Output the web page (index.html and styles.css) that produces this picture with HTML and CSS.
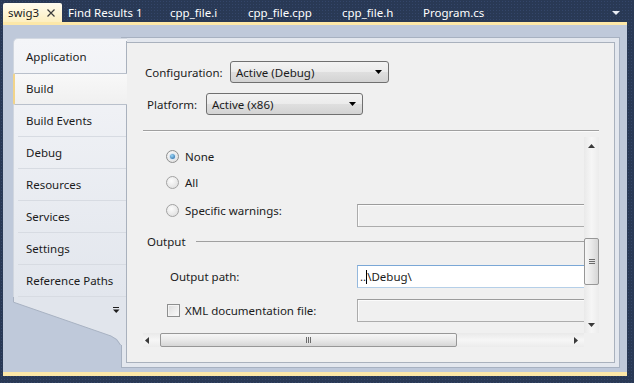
FILE: index.html
```html
<!DOCTYPE html>
<html lang="en">
<head>
    <meta charset="UTF-8">
    <title>swig3 - Build</title>
    <link rel="stylesheet" href="styles.css">
</head>
<body>
    <div class="window">
        <div class="tabstrip">
            <div class="tab active">
                <span>swig3</span>
                <svg class="close" width="8" height="8" viewBox="0 0 8 8"><path d="M0.5 0.5L7.5 7.5M7.5 0.5L0.5 7.5" stroke="#3c3c3c" stroke-width="1.2"/></svg>
            </div>
            <div class="tab tab-find">Find Results 1</div>
            <div class="tab tab-i">cpp_file.i</div>
            <div class="tab tab-cpp">cpp_file.cpp</div>
            <div class="tab tab-h">cpp_file.h</div>
            <div class="tab tab-cs">Program.cs</div>
            <svg class="tab-menu" width="8" height="5" viewBox="0 0 8 5"><path d="M0 0H8L4 4Z" fill="#e8ecf4"/></svg>
        </div>
        <div class="tabline"></div>

        <div class="doc">
            <nav class="pages">
                <div class="page-list">
                    <div class="page">Application</div>
                    <div class="page selected">Build</div>
                    <div class="page">Build Events</div>
                    <div class="page">Debug</div>
                    <div class="page">Resources</div>
                    <div class="page">Services</div>
                    <div class="page">Settings</div>
                    <div class="page">Reference Paths</div>
                </div>
                <svg class="pages-foot" width="114" height="48" viewBox="0 0 114 48">
                    <path d="M0 0H114V48H108L104 42L98 39L0 5Z" fill="#e1e5ec"/>
                    <path d="M0.5 0V5.2L98 39L103.5 42.5L107.5 48" fill="none" stroke="#a8b2c2"/>
                    <path d="M113.5 0V48" stroke="#a9b1bd"/>
                    <path d="M100 10.5H106" stroke="#1e1e1e"/>
                    <path d="M100 12.5H106.5L103.25 16Z" fill="#1e1e1e"/>
                </svg>
            </nav>

            <div class="frame">
                <div class="panel">
                    <div class="field field-config">
                        <label>Configuration:</label>
                        <div class="combo combo-config">
                            <span>Active (Debug)</span>
                            <svg width="7" height="4" viewBox="0 0 7 4"><path d="M0 0H7L3.5 4Z" fill="#000"/></svg>
                        </div>
                    </div>
                    <div class="field field-platform">
                        <label>Platform:</label>
                        <div class="combo combo-platform">
                            <span>Active (x86)</span>
                            <svg width="7" height="4" viewBox="0 0 7 4"><path d="M0 0H7L3.5 4Z" fill="#000"/></svg>
                        </div>
                    </div>
                    <div class="rule"></div>

                    <div class="scroller">
                        <div class="viewport">
                            <div class="row row-none">
                                <div class="cell"><span class="radio checked"></span>None</div>
                            </div>
                            <div class="row row-all">
                                <div class="cell"><span class="radio"></span>All</div>
                            </div>
                            <div class="row row-specific">
                                <div class="cell"><span class="radio"></span>Specific warnings:</div>
                                <div class="textbox"></div>
                            </div>
                            <div class="group-head">
                                <span>Output</span>
                                <div class="group-line"></div>
                            </div>
                            <div class="row row-path">
                                <div class="cell">Output path:</div>
                                <div class="textbox editing">..<span class="caret"></span>\Debug\</div>
                            </div>
                            <div class="row row-xml">
                                <div class="cell"><span class="checkbox"></span>XML documentation file:</div>
                                <div class="textbox"></div>
                            </div>
                        </div>

                        <div class="vscroll">
                            <div class="sbtn"><svg width="7" height="4" viewBox="0 0 7 4"><path d="M0 4H7L3.5 0Z" fill="#3a3a3a"/></svg></div>
                            <div class="vtrack">
                                <div class="vthumb">
                                    <span></span><span></span><span></span>
                                </div>
                            </div>
                            <div class="sbtn"><svg width="7" height="4" viewBox="0 0 7 4"><path d="M0 0H7L3.5 4Z" fill="#3a3a3a"/></svg></div>
                        </div>
                        <div class="hscroll">
                            <div class="sbtn sbtn-left"><svg width="4" height="7" viewBox="0 0 4 7"><path d="M4 0V7L0 3.5Z" fill="#3a3a3a"/></svg></div>
                            <div class="htrack">
                                <div class="hthumb">
                                    <span></span><span></span><span></span>
                                </div>
                            </div>
                            <div class="sbtn"><svg width="4" height="7" viewBox="0 0 4 7"><path d="M0 0V7L4 3.5Z" fill="#3a3a3a"/></svg></div>
                        </div>
                        <div class="corner"></div>
                    </div>
                </div>
            </div>
        </div>
        <div class="bottomline"></div>
    </div>
</body>
</html>
```

FILE: styles.css
```css
body {
    margin: 0;
    height: 383px;
    overflow: hidden;
    background-color: #293955;
    background-image: radial-gradient(circle, #34466a 0.6px, transparent 0.9px);
    background-size: 3px 3px;
    font-family: "Noto Sans", sans-serif;
    font-size: 11.5px;
    color: #1b1b1b;
}

.window {
    width: 624px;
    margin-left: 3px;
}

/* document tabs */

.tabstrip {
    display: flex;
    align-items: flex-end;
    height: 22px;
}

.tab {
    height: 19px;
    line-height: 19px;
    color: #fff;
    box-sizing: border-box;
    white-space: nowrap;
    padding-left: 16px;
}

.tab.active {
    width: 59px;
    padding: 0 7px 0 5px;
    display: flex;
    align-items: center;
    justify-content: space-between;
    color: #1b1b1b;
    background: linear-gradient(#fffcef, #fdefc0);
    border-radius: 2px 2px 0 0;
}

.tab-find { width: 92px; padding-left: 6px; }
.tab-i { width: 78px; }
.tab-cpp { width: 94px; }
.tab-h { width: 81px; }
.tab-cs { width: 100px; }

.tab-menu {
    margin-left: auto;
    margin-right: 7px;
    align-self: center;
    margin-top: 4px;
}

.tabline {
    height: 3px;
    background: #fde8a8;
}

.bottomline {
    height: 4px;
    background: #fde8a8;
}

/* document area */

.doc {
    display: flex;
    height: 347px;
    box-sizing: border-box;
    padding: 12px 7px 4px 10px;
    background: #bfc9da;
}

.pages {
    width: 114px;
    height: 307px;
    margin-top: 1px;
    margin-right: -6px;
    position: relative;
    z-index: 1;
    display: flex;
    flex-direction: column;
}

.page-list {
    height: 259px;
    box-sizing: border-box;
    padding-top: 2px;
    border-top: 1px solid #d3d9e2;
    border-left: 1px solid #d0d6df;
    border-top-left-radius: 5px;
    background: linear-gradient(#f4f5f8, #e2e6ed);
}

.page {
    height: 32px;
    line-height: 32px;
    box-sizing: border-box;
    padding-left: 12px;
    border-right: 1px solid #a9b1bd;
    background: linear-gradient(#d7dbe2, #d7dbe2) no-repeat 4px 100% / calc(100% - 4px) 1px;
}

.page:has(+ .selected) {
    background: none;
}

.page.selected {
    width: calc(100% + 1px);
    margin-left: -1px;
    padding-left: 11px;
    line-height: 30px;
    border-right: none;
    border-left: 2px solid #f2d48a;
    border-top: 1px solid #b9c0cb;
    border-bottom: 1px solid #b9c0cb;
    border-radius: 2px 0 0 2px;
    background: linear-gradient(#f8f8f8, #f0f0f0);
}

.pages-foot {
    display: block;
}

.frame {
    flex: 1;
    padding: 4px;
    border: 1px solid #a7b1c1;
    background: #e3e7ee;
}

.panel {
    height: 100%;
    box-sizing: border-box;
    padding: 18px 15px 0 16px;
    border: 1px solid #a9b1bd;
    background: #f0f0f0;
}

/* configuration */

.field {
    display: flex;
    align-items: center;
}

.field-config {
    padding-left: 2px;
}

.field-config label {
    width: 85px;
}

.field-platform {
    padding-left: 4px;
    margin-top: 10px;
}

.field-platform label {
    width: 59px;
}

.combo {
    height: 22px;
    box-sizing: border-box;
    display: flex;
    align-items: center;
    justify-content: space-between;
    padding: 0 6px 0 5px;
    border: 1px solid #707070;
    border-radius: 3px;
    background: linear-gradient(#f3f3f3 0%, #ebebeb 50%, #dfdfdf 51%, #d3d3d3 100%);
}

.combo-config { width: 159px; }
.combo-platform { width: 157px; }

.rule {
    height: 1px;
    margin-top: 15px;
    background: #a0a0a0;
    border-bottom: 1px solid #fbfbfb;
    width: 456px;
}

/* scrolled options */

.scroller {
    margin-top: 5px;
    display: grid;
    grid-template-columns: 441px 15px;
    grid-template-rows: 196px 14px;
}

.viewport {
    overflow: hidden;
    padding-top: 6px;
}

.row {
    display: grid;
    grid-template-columns: 214px 300px;
    align-items: center;
}

.cell {
    display: flex;
    align-items: center;
    gap: 6px;
    padding-left: 23px;
    white-space: nowrap;
}

.row-none { height: 26px; }
.row-all { height: 27px; }

.row-specific {
    height: 31px;
    align-items: start;
}

.row-specific .cell {
    height: 28px;
}

.row-specific .textbox {
    margin-top: 8px;
}

.row-path {
    margin-top: 10px;
}

.row-path .cell {
    padding-left: 27px;
}

.row-xml {
    margin-top: 11px;
}

.row-xml .cell {
    padding-left: 24px;
    gap: 5px;
}

.group-head {
    height: 28px;
    display: flex;
    align-items: center;
    padding-left: 4px;
}

.group-line {
    flex: 1;
    height: 1px;
    margin-left: 10px;
    background: #a0a0a0;
}

.radio {
    width: 13px;
    height: 13px;
    box-sizing: border-box;
    border-radius: 50%;
    border: 1px solid #a2a2a2;
    background: radial-gradient(circle at 40% 35%, #fcfcfc, #dadada);
    display: flex;
    align-items: center;
    justify-content: center;
}

.radio.checked {
    border-color: #8e8f8f;
}

.radio.checked::after {
    content: "";
    width: 5px;
    height: 5px;
    border-radius: 50%;
    background: radial-gradient(circle at 40% 35%, #9ad6f7, #1b5e9d);
    box-shadow: 0 0 0 1px #d8e6f3;
}

.checkbox {
    width: 13px;
    height: 13px;
    box-sizing: border-box;
    border: 1px solid #8e8f8f;
    background: linear-gradient(135deg, #dcdcdc, #fbfbfb);
    box-shadow: inset 0 0 0 1px #f4f4f4;
}

.textbox {
    height: 23px;
    box-sizing: border-box;
    border: 1px solid #acacac;
    border-top-color: #9c9c9c;
    background: #f0f0f0;
    box-shadow: inset 1px 1px 0 #fbfbfb;
}

.textbox.editing {
    background: #fff;
    border-color: #b5cfe8;
    border-top-color: #7aa7d6;
    border-left-color: #94b8dd;
    box-shadow: none;
    padding-left: 2px;
    line-height: 21px;
    display: flex;
    align-items: center;
}

.caret {
    display: inline-block;
    width: 1px;
    height: 14px;
    background: #000;
}

/* scrollbars */

.vscroll {
    display: flex;
    flex-direction: column;
    background: linear-gradient(to right, #e9e9e9, #f6f6f6 50%, #ececec);
}

.sbtn {
    flex: 0 0 17px;
    display: flex;
    align-items: center;
    justify-content: center;
}

.vtrack {
    flex: 1;
    padding-top: 84px;
}

.vthumb {
    height: 47px;
    box-sizing: border-box;
    border: 1px solid #979797;
    border-radius: 2px;
    background: linear-gradient(to right, #f6f6f6, #e9e9e9 50%, #d6d6d6);
    display: flex;
    flex-direction: column;
    align-items: center;
    justify-content: center;
    gap: 1px;
}

.vthumb span {
    width: 6px;
    height: 1px;
    background: #6b6b6b;
}

.hscroll {
    display: flex;
    background: linear-gradient(#e9e9e9, #f6f6f6 50%, #ececec);
}

.sbtn-left {
    justify-content: flex-start;
    padding-left: 2px;
    flex-basis: 15px;
}

.htrack {
    flex: 1;
    padding-left: 0;
}

.hthumb {
    width: 297px;
    height: 100%;
    box-sizing: border-box;
    border: 1px solid #979797;
    border-radius: 2px;
    background: linear-gradient(#f6f6f6, #e9e9e9 50%, #d6d6d6);
    display: flex;
    align-items: center;
    justify-content: center;
    gap: 1px;
}

.hthumb span {
    width: 1px;
    height: 6px;
    background: #6b6b6b;
}

.corner {
    background: #f0f0f0;
}
```
